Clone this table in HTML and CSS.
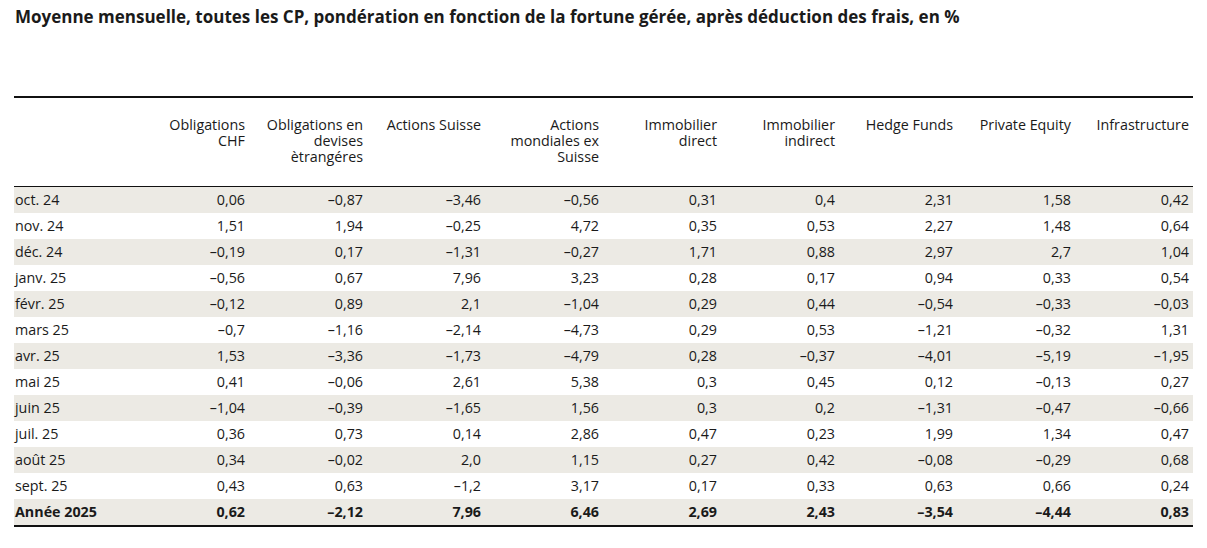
FILE: index.html
```html
<!DOCTYPE html>
<html lang="fr">
<head>
<meta charset="utf-8">
<title>Performance</title>
<link rel="stylesheet" href="styles.css">
</head>
<body>
<h1 class="title">Moyenne mensuelle, toutes les CP, pondération en fonction de la fortune gérée, après déduction des frais, en %</h1>
<table class="perf">
<colgroup>
<col class="c-label"><col class="c-val"><col class="c-val"><col class="c-val"><col class="c-val"><col class="c-val"><col class="c-val"><col class="c-val"><col class="c-val"><col class="c-val">
</colgroup>
<thead>
<tr>
<th class="h-label"></th>
<th>Obligations CHF</th>
<th>Obligations en devises ètrangéres</th>
<th>Actions Suisse</th>
<th>Actions mondiales ex Suisse</th>
<th>Immobilier direct</th>
<th>Immobilier indirect</th>
<th>Hedge Funds</th>
<th>Private Equity</th>
<th>Infrastructure</th>
</tr>
</thead>
<tbody>
<tr class="alt"><td>oct. 24</td><td>0,06</td><td>–0,87</td><td>–3,46</td><td>–0,56</td><td>0,31</td><td>0,4</td><td>2,31</td><td>1,58</td><td>0,42</td></tr>
<tr><td>nov. 24</td><td>1,51</td><td>1,94</td><td>–0,25</td><td>4,72</td><td>0,35</td><td>0,53</td><td>2,27</td><td>1,48</td><td>0,64</td></tr>
<tr class="alt"><td>déc. 24</td><td>–0,19</td><td>0,17</td><td>–1,31</td><td>–0,27</td><td>1,71</td><td>0,88</td><td>2,97</td><td>2,7</td><td>1,04</td></tr>
<tr><td>janv. 25</td><td>–0,56</td><td>0,67</td><td>7,96</td><td>3,23</td><td>0,28</td><td>0,17</td><td>0,94</td><td>0,33</td><td>0,54</td></tr>
<tr class="alt"><td>févr. 25</td><td>–0,12</td><td>0,89</td><td>2,1</td><td>–1,04</td><td>0,29</td><td>0,44</td><td>–0,54</td><td>–0,33</td><td>–0,03</td></tr>
<tr><td>mars 25</td><td>–0,7</td><td>–1,16</td><td>–2,14</td><td>–4,73</td><td>0,29</td><td>0,53</td><td>–1,21</td><td>–0,32</td><td>1,31</td></tr>
<tr class="alt"><td>avr. 25</td><td>1,53</td><td>–3,36</td><td>–1,73</td><td>–4,79</td><td>0,28</td><td>–0,37</td><td>–4,01</td><td>–5,19</td><td>–1,95</td></tr>
<tr><td>mai 25</td><td>0,41</td><td>–0,06</td><td>2,61</td><td>5,38</td><td>0,3</td><td>0,45</td><td>0,12</td><td>–0,13</td><td>0,27</td></tr>
<tr class="alt"><td>juin 25</td><td>–1,04</td><td>–0,39</td><td>–1,65</td><td>1,56</td><td>0,3</td><td>0,2</td><td>–1,31</td><td>–0,47</td><td>–0,66</td></tr>
<tr><td>juil. 25</td><td>0,36</td><td>0,73</td><td>0,14</td><td>2,86</td><td>0,47</td><td>0,23</td><td>1,99</td><td>1,34</td><td>0,47</td></tr>
<tr class="alt"><td>août 25</td><td>0,34</td><td>–0,02</td><td>2,0</td><td>1,15</td><td>0,27</td><td>0,42</td><td>–0,08</td><td>–0,29</td><td>0,68</td></tr>
<tr><td>sept. 25</td><td>0,43</td><td>0,63</td><td>–1,2</td><td>3,17</td><td>0,17</td><td>0,33</td><td>0,63</td><td>0,66</td><td>0,24</td></tr>
<tr class="alt total"><td>Année 2025</td><td>0,62</td><td>–2,12</td><td>7,96</td><td>6,46</td><td>2,69</td><td>2,43</td><td>–3,54</td><td>–4,44</td><td>0,83</td></tr>
</tbody>
</table>
</body>
</html>
```

FILE: styles.css
```css
html, body {
  margin: 0;
  padding: 0;
  background: #ffffff;
}
body {
  padding: 0 14px;
  font-family: "Open Sans", "Noto Sans", sans-serif;
  color: #1a1a1a;
}
.title {
  margin: 5px 0 0 1px;
  font-size: 17px;
  line-height: 24px;
  font-weight: 700;
  color: #1a1a1a;
}
.perf {
  margin-top: 67px;
  width: 1179px;
  border-collapse: collapse;
  table-layout: fixed;
  font-size: 14.3px;
}
.c-label { width: 117px; }
.c-val { width: 118px; }
.perf thead tr {
  border-top: 2px solid #111;
  border-bottom: 1px solid #111;
}
.perf th {
  font-weight: 400;
  text-align: right;
  vertical-align: top;
  line-height: 16px;
  padding: 19px 4px 21px 12px;
}
.perf td {
  text-align: right;
  height: 26px;
  padding: 0 4px 0 12px;
  line-height: 26px;
  white-space: nowrap;
}
.perf td:first-child {
  text-align: left;
  padding-left: 1px;
}
.perf tr.alt td {
  background: #eceae4;
}
.perf tr.total {
  border-bottom: 2px solid #111;
}
.perf tr.total td {
  font-weight: 700;
}
```
